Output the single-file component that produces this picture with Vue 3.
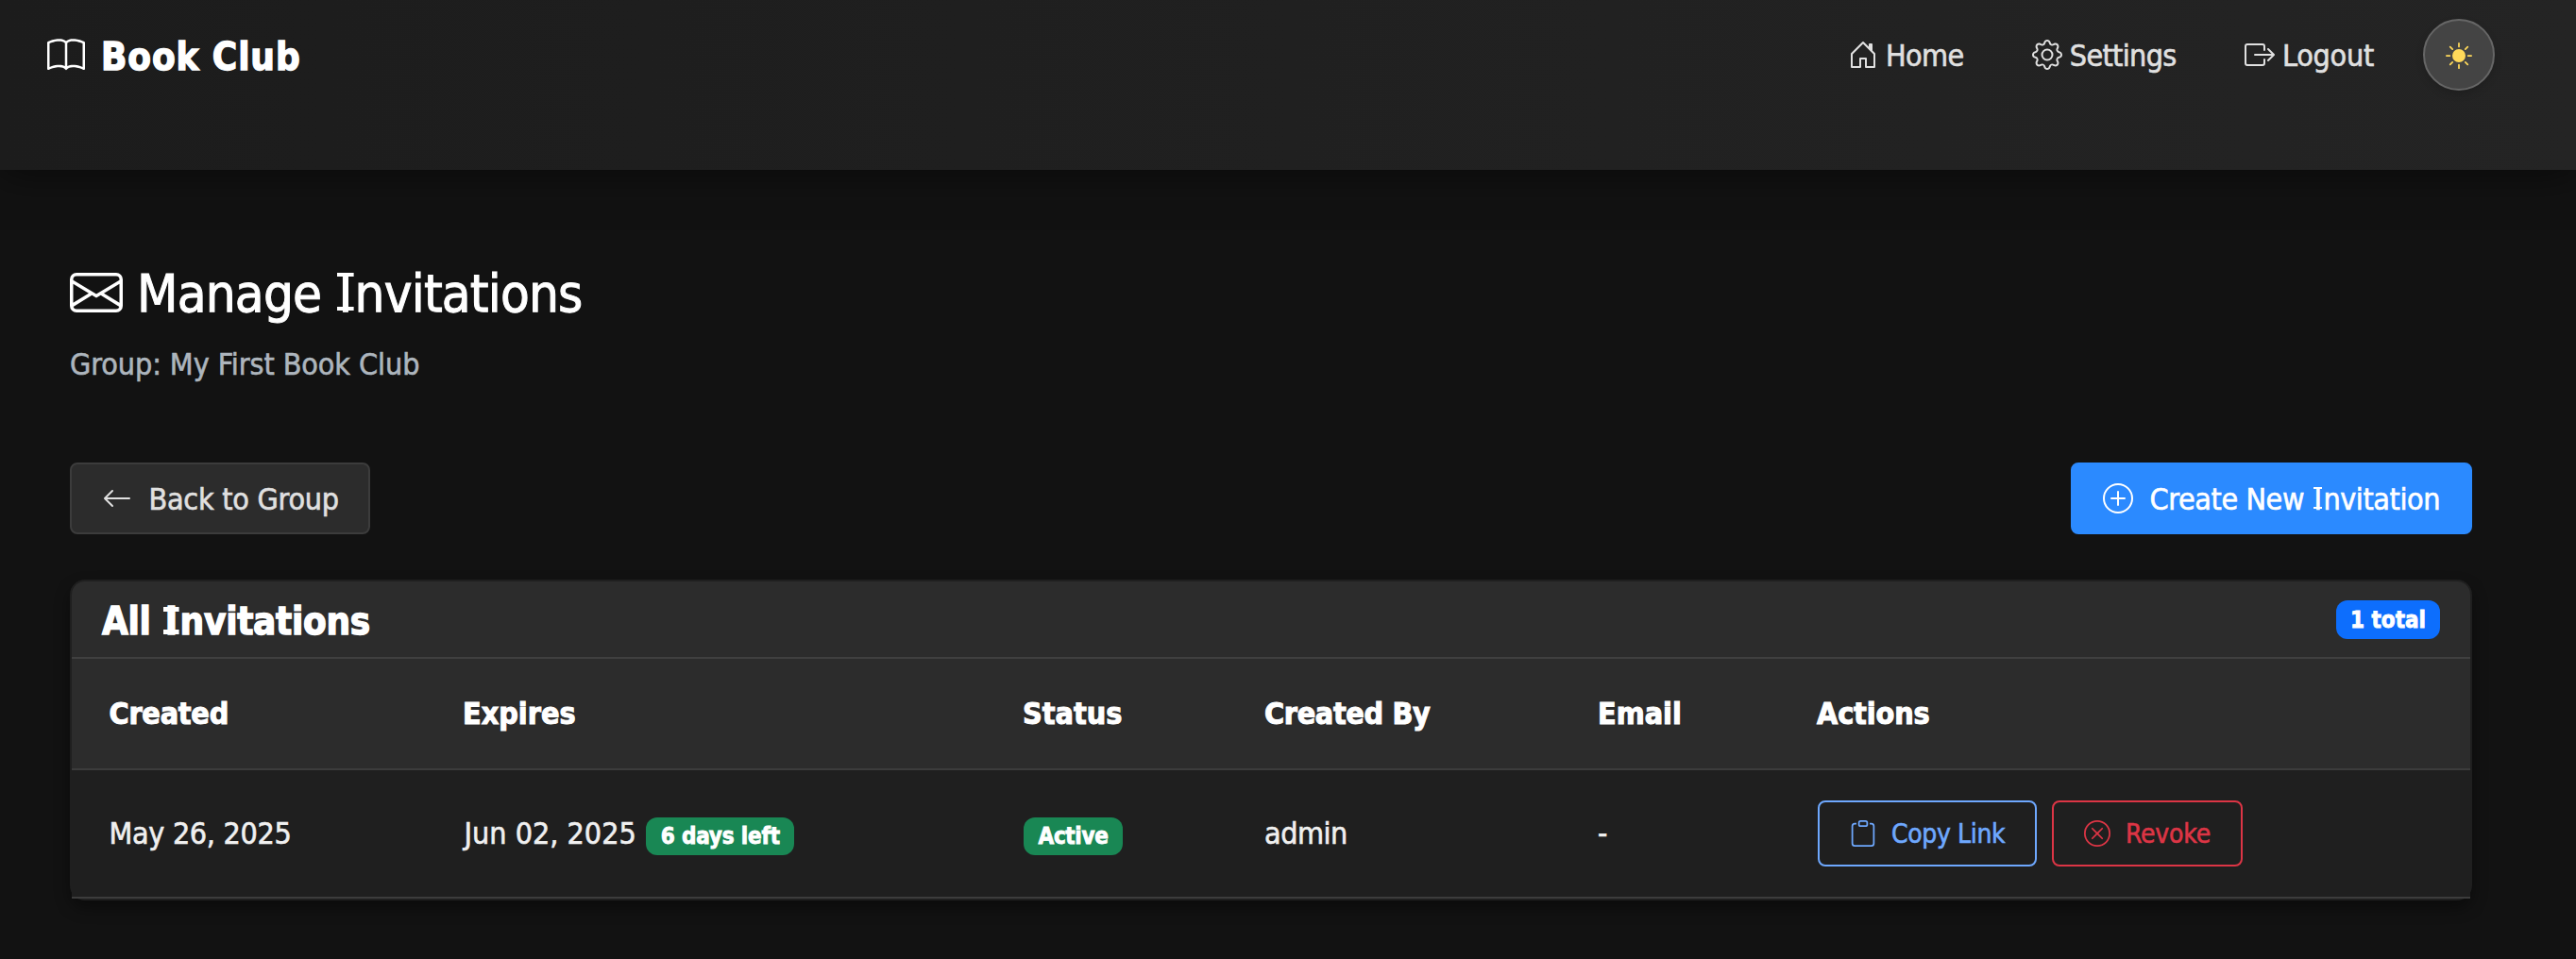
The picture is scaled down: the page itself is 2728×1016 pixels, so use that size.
<script setup>
const columns = [
  { key: 'created', label: 'Created', width: 374 },
  { key: 'expires', label: 'Expires', width: 593 },
  { key: 'status', label: 'Status', width: 256 },
  { key: 'by', label: 'Created By', width: 353 },
  { key: 'email', label: 'Email', width: 232 },
  { key: 'actions', label: 'Actions', width: 732 },
]
</script>

<template>
  <div class="page">
    <header class="navbar">
      <a class="brand">
        <svg class="icon i40" viewBox="0 0 16 16"><path d="M1 2.828c.885-.37 2.154-.769 3.388-.893 1.33-.134 2.458.063 3.112.752v9.746c-.935-.53-2.12-.603-3.213-.493-1.18.12-2.37.461-3.287.811zm7.5-.141c.654-.689 1.782-.886 3.112-.752 1.234.124 2.503.523 3.388.893v9.923c-.918-.35-2.107-.692-3.287-.81-1.094-.111-2.278-.039-3.213.492zM8 1.783C7.015.936 5.587.81 4.287.94c-1.514.153-3.042.672-3.994 1.105A.5.5 0 0 0 0 2.5v11a.5.5 0 0 0 .707.455c.882-.4 2.303-.881 3.68-1.02 1.409-.142 2.59.087 3.223.877a.5.5 0 0 0 .78 0c.633-.79 1.814-1.019 3.222-.877 1.378.139 2.8.62 3.681 1.02A.5.5 0 0 0 16 13.5v-11a.5.5 0 0 0-.293-.455c-.952-.433-2.48-.952-3.994-1.105C10.413.809 8.985.936 8 1.783" /></svg>
        <span class="brand-name">Book Club</span>
      </a>
      <nav class="links">
        <a class="link home">
          <svg class="icon i32" viewBox="0 0 16 16"><path d="M8.354 1.146a.5.5 0 0 0-.708 0l-6 6A.5.5 0 0 0 1.5 7.5v7a.5.5 0 0 0 .5.5h4.5a.5.5 0 0 0 .5-.5v-4h2v4a.5.5 0 0 0 .5.5H14a.5.5 0 0 0 .5-.5v-7a.5.5 0 0 0-.146-.354L13 5.793V2.5a.5.5 0 0 0-.5-.5h-1a.5.5 0 0 0-.5.5v1.293zM2.5 14V7.707l5.5-5.5 5.5 5.5V14H10v-4a.5.5 0 0 0-.5-.5h-3a.5.5 0 0 0-.5.5v4z" /></svg>
          <span>Home</span>
        </a>
        <a class="link settings">
          <svg class="icon i32" viewBox="0 0 16 16"><path d="M8 4.754a3.246 3.246 0 1 0 0 6.492 3.246 3.246 0 0 0 0-6.492M5.754 8a2.246 2.246 0 1 1 4.492 0 2.246 2.246 0 0 1-4.492 0" /><path d="M9.796 1.343c-.527-1.79-3.065-1.79-3.592 0l-.094.319a.873.873 0 0 1-1.255.52l-.292-.16c-1.64-.892-3.433.902-2.54 2.541l.159.292a.873.873 0 0 1-.52 1.255l-.319.094c-1.79.527-1.79 3.065 0 3.592l.319.094a.873.873 0 0 1 .52 1.255l-.16.292c-.892 1.64.901 3.434 2.541 2.54l.292-.159a.873.873 0 0 1 1.255.52l.094.319c.527 1.79 3.065 1.79 3.592 0l.094-.319a.873.873 0 0 1 1.255-.52l.292.16c1.64.893 3.434-.902 2.54-2.541l-.159-.292a.873.873 0 0 1 .52-1.255l.319-.094c1.79-.527 1.79-3.065 0-3.592l-.319-.094a.873.873 0 0 1-.52-1.255l.16-.292c.893-1.64-.902-3.433-2.541-2.54l-.292.159a.873.873 0 0 1-1.255-.52zm-2.633.283c.246-.835 1.428-.835 1.674 0l.094.319a1.873 1.873 0 0 0 2.693 1.115l.291-.16c.764-.415 1.6.42 1.184 1.185l-.159.292a1.873 1.873 0 0 0 1.116 2.692l.318.094c.835.246.835 1.428 0 1.674l-.319.094a1.873 1.873 0 0 0-1.115 2.693l.16.291c.415.764-.42 1.6-1.185 1.184l-.291-.159a1.873 1.873 0 0 0-2.693 1.116l-.094.318c-.246.835-1.428.835-1.674 0l-.094-.319a1.873 1.873 0 0 0-2.692-1.115l-.292.16c-.764.415-1.6-.42-1.184-1.185l.159-.291A1.873 1.873 0 0 0 1.945 8.93l-.319-.094c-.835-.246-.835-1.428 0-1.674l.319-.094A1.873 1.873 0 0 0 3.06 4.377l-.16-.292c-.415-.764.42-1.6 1.185-1.184l.292.159a1.873 1.873 0 0 0 2.692-1.115z" /></svg>
          <span>Settings</span>
        </a>
        <a class="link logout">
          <svg class="icon i32" viewBox="0 0 16 16"><path fill-rule="evenodd" d="M10 12.5a.5.5 0 0 1-.5.5h-8a.5.5 0 0 1-.5-.5v-9a.5.5 0 0 1 .5-.5h8a.5.5 0 0 1 .5.5v2a.5.5 0 0 0 1 0v-2A1.5 1.5 0 0 0 9.5 2h-8A1.5 1.5 0 0 0 0 3.5v9A1.5 1.5 0 0 0 1.5 14h8a1.5 1.5 0 0 0 1.5-1.5v-2a.5.5 0 0 0-1 0z" /><path fill-rule="evenodd" d="M15.854 8.354a.5.5 0 0 0 0-.708l-3-3a.5.5 0 0 0-.708.708L14.293 7.5H5.5a.5.5 0 0 0 0 1h8.793l-2.147 2.146a.5.5 0 0 0 .708.708z" /></svg>
          <span>Logout</span>
        </a>
      </nav>
      <button class="theme" aria-label="Toggle theme">
        <svg class="icon sun" viewBox="0 0 16 16"><path d="M8 12a4 4 0 1 0 0-8 4 4 0 0 0 0 8M8 0a.5.5 0 0 1 .5.5v2a.5.5 0 0 1-1 0v-2A.5.5 0 0 1 8 0m0 13a.5.5 0 0 1 .5.5v2a.5.5 0 0 1-1 0v-2A.5.5 0 0 1 8 13m8-5a.5.5 0 0 1-.5.5h-2a.5.5 0 0 1 0-1h2a.5.5 0 0 1 .5.5M3 8a.5.5 0 0 1-.5.5h-2a.5.5 0 0 1 0-1h2A.5.5 0 0 1 3 8m10.657-5.657a.5.5 0 0 1 0 .707l-1.414 1.415a.5.5 0 1 1-.707-.708l1.414-1.414a.5.5 0 0 1 .707 0m-9.193 9.193a.5.5 0 0 1 0 .707L3.05 13.657a.5.5 0 0 1-.707-.707l1.414-1.414a.5.5 0 0 1 .707 0m9.193 2.121a.5.5 0 0 1-.707 0l-1.414-1.414a.5.5 0 0 1 .707-.707l1.414 1.414a.5.5 0 0 1 0 .707M4.464 4.465a.5.5 0 0 1-.707 0L2.343 3.05a.5.5 0 1 1 .707-.707l1.414 1.414a.5.5 0 0 1 0 .708" /></svg>
      </button>
    </header>

    <main class="content">
      <h1 class="title">
        <svg class="icon i56" viewBox="0 0 16 16"><path d="M0 4a2 2 0 0 1 2-2h12a2 2 0 0 1 2 2v8a2 2 0 0 1-2 2H2a2 2 0 0 1-2-2zm2-1a1 1 0 0 0-1 1v.217l7 4.2 7-4.2V4a1 1 0 0 0-1-1zm13 2.383-4.708 2.825L15 11.105zm-.034 6.876-5.64-3.471L8 9.583l-1.326-.795-5.64 3.47A1 1 0 0 0 2 13h12a1 1 0 0 0 .966-.741M1 11.105l4.708-2.897L1 5.383z" /></svg>
        <span class="title-text">Manage <span class="cap-i">I</span>nvitations</span>
      </h1>
      <p class="subtitle">Group: My First Book Club</p>

      <div class="toolbar">
        <button class="btn back">
          <svg class="icon i32" viewBox="0 0 16 16"><path fill-rule="evenodd" d="M15 8a.5.5 0 0 0-.5-.5H2.707l3.147-3.146a.5.5 0 1 0-.708-.708l-4 4a.5.5 0 0 0 0 .708l4 4a.5.5 0 0 0 .708-.708L2.707 8.5H14.5A.5.5 0 0 0 15 8" /></svg>
          <span>Back to Group</span>
        </button>
        <button class="btn create">
          <svg class="icon i32" viewBox="0 0 16 16"><path d="M8 15A7 7 0 1 1 8 1a7 7 0 0 1 0 14m0 1A8 8 0 1 0 8 0a8 8 0 0 0 0 16" /><path d="M8 4a.5.5 0 0 1 .5.5v3h3a.5.5 0 0 1 0 1h-3v3a.5.5 0 0 1-1 0v-3h-3a.5.5 0 0 1 0-1h3v-3A.5.5 0 0 1 8 4" /></svg>
          <span>Create New <span class="cap-i">I</span>nvitation</span>
        </button>
      </div>

      <section class="card">
        <div class="card-header">
          <h2 class="card-title">All <span class="cap-i bold">I</span>nvitations</h2>
          <span class="badge total">1 total</span>
        </div>
        <table class="table">
          <colgroup>
            <col v-for="c in columns" :key="c.key" :style="{ width: c.width + 'px' }" />
          </colgroup>
          <thead>
            <tr>
              <th v-for="c in columns" :key="c.key" :class="'th-' + c.key">{{ c.label }}</th>
            </tr>
          </thead>
          <tbody>
            <tr>
              <td class="date">May 26, 2025</td>
              <td>
                <div class="expires">
                  <span>Jun 02, 2025</span>
                  <span class="badge days">6 days left</span>
                </div>
              </td>
              <td><div class="state"><span class="badge active">Active</span></div></td>
              <td class="user">admin</td>
              <td>-</td>
              <td>
                <div class="actions">
                  <button class="btn-sm copy">
                    <svg class="icon i28" viewBox="0 0 16 16"><path d="M4 1.5H3a2 2 0 0 0-2 2V14a2 2 0 0 0 2 2h10a2 2 0 0 0 2-2V3.5a2 2 0 0 0-2-2h-1v1h1a1 1 0 0 1 1 1V14a1 1 0 0 1-1 1H3a1 1 0 0 1-1-1V3.5a1 1 0 0 1 1-1h1z" /><path d="M9.5 1a.5.5 0 0 1 .5.5v1a.5.5 0 0 1-.5.5h-3a.5.5 0 0 1-.5-.5v-1a.5.5 0 0 1 .5-.5zm-3-1A1.5 1.5 0 0 0 5 1.5v1A1.5 1.5 0 0 0 6.5 4h3A1.5 1.5 0 0 0 11 2.5v-1A1.5 1.5 0 0 0 9.5 0z" /></svg>
                    <span>Copy Link</span>
                  </button>
                  <button class="btn-sm revoke">
                    <svg class="icon i28" viewBox="0 0 16 16"><path d="M8 15A7 7 0 1 1 8 1a7 7 0 0 1 0 14m0 1A8 8 0 1 0 8 0a8 8 0 0 0 0 16" /><path d="M4.646 4.646a.5.5 0 0 1 .708 0L8 7.293l2.646-2.647a.5.5 0 0 1 .708.708L8.707 8l2.647 2.646a.5.5 0 0 1-.708.708L8 8.707l-2.646 2.647a.5.5 0 0 1-.708-.708L7.293 8 4.646 5.354a.5.5 0 0 1 0-.708" /></svg>
                    <span>Revoke</span>
                  </button>
                </div>
              </td>
            </tr>
          </tbody>
        </table>
      </section>
    </main>
  </div>
</template>

<style>
body {
  margin: 0;
  background: #121212;
}
</style>

<style scoped>
.page,
.page button {
  font-family: Tahoma, "DejaVu Sans Condensed", "DejaVu Sans", sans-serif;
  font-stretch: condensed;
  -webkit-text-stroke: 0.6px currentColor;
}
.page {
  box-sizing: border-box;
  height: 1016px;
  overflow: hidden;
  background: #121212;
  color: #f0f0f0;
  font-size: 32px;
  line-height: 48px;
  white-space: nowrap;
}
.page * {
  box-sizing: border-box;
}
.icon {
  display: block;
  flex: none;
  fill: currentColor;
}
.i28 { width: 28px; height: 28px; }
.i32 { width: 32px; height: 32px; }
.i40 { width: 40px; height: 40px; }
.i56 { width: 56px; height: 56px; }

/* slab serifs for the capital I */
.cap-i {
  --bar: 0.078em;
  padding: 0 0.055em;
  background:
    linear-gradient(currentColor, currentColor) 50% 0.199em / calc(100% - 0.06em) var(--bar) no-repeat,
    linear-gradient(currentColor, currentColor) 50% calc(0.93em - var(--bar)) / calc(100% - 0.06em) var(--bar) no-repeat;
}
.cap-i.bold {
  --bar: 0.125em;
  padding: 0 0.07em;
}

.navbar {
  display: flex;
  align-items: flex-start;
  height: 180px;
  padding: 20px 86px 0 50px;
  background: linear-gradient(90deg, #1c1c1c, #242424);
  box-shadow: 0 4px 40px rgba(0, 0, 0, 0.5);
}
.brand {
  display: flex;
  align-items: center;
  gap: 17px;
  height: 78px;
  color: #fff;
}
.brand-name {
  margin-top: 2px;
  font-size: 40px;
  font-weight: 700;
  letter-spacing: 0.9px;
  -webkit-text-stroke-width: 1.3px;
}
.links {
  display: flex;
  gap: 72.3px;
  height: 76px;
  margin-left: auto;
  margin-right: 52px;
  color: #e0e0e0;
}
.link {
  display: flex;
  align-items: center;
  gap: 8px;
}
.link span {
  margin-top: 1px;
}
.home span { letter-spacing: -0.6px; }
.settings span { letter-spacing: -0.66px; }
.logout span { letter-spacing: -0.24px; }
.theme {
  display: flex;
  align-items: center;
  justify-content: center;
  width: 76px;
  height: 76px;
  padding: 2px 0 0;
  border: 2px solid #666;
  border-radius: 50%;
  background: #444;
  box-shadow: 0 4px 8px rgba(0, 0, 0, 0.15);
}
.sun {
  width: 28px;
  height: 28px;
  color: #ffd95a;
}

.content {
  padding: 102px 110px 0 74px;
}
.title {
  display: flex;
  align-items: center;
  gap: 15px;
  height: 56px;
  margin: 0;
  color: #fff;
  font-size: 56px;
  font-weight: 400;
  line-height: 66px;
}
.title-text {
  margin-top: 1px;
  letter-spacing: -0.82px;
  -webkit-text-stroke-width: 1px;
}
.subtitle {
  margin: 24px 0 80px;
  color: #adb5bd;
  letter-spacing: -0.08px;
}
.toolbar {
  display: flex;
  justify-content: space-between;
}
.btn {
  display: flex;
  align-items: center;
  height: 76px;
  margin: 0;
  padding: 0;
  border: 2px solid;
  border-radius: 8px;
  font-size: 32px;
  line-height: 48px;
}
.btn > span {
  margin-top: 2px;
}
.back {
  width: 318px;
  padding-left: 32px;
  gap: 17.5px;
  border-color: #3c3c3c;
  background: #2c2c2c;
  color: #e0e0e0;
  letter-spacing: -0.26px;
}
.create {
  width: 425px;
  padding-left: 32px;
  gap: 17.5px;
  border-color: #2b8aff;
  background: #2b8aff;
  color: #fff;
  letter-spacing: -0.4px;
}

.card {
  height: 340px;
  margin-top: 48px;
  border: 2px solid #1f1f1f;
  border-radius: 16px;
  background: #1f1f1f;
  box-shadow: 0 8px 16px rgba(0, 0, 0, 0.4);
}
.card-header {
  display: flex;
  align-items: center;
  justify-content: space-between;
  height: 82px;
  padding: 0 32px;
  border-bottom: 2px solid #404040;
  border-radius: 14px 14px 0 0;
  background: #2c2c2c;
}
.card-title {
  margin: 4px 0 0;
  color: #fff;
  font-size: 40px;
  font-weight: 700;
  letter-spacing: -0.28px;
  -webkit-text-stroke-width: 1.3px;
}
.badge {
  display: flex;
  align-items: center;
  justify-content: center;
  height: 40px;
  border-radius: 12px;
  color: #fff;
  font-size: 24px;
  font-weight: 700;
  line-height: 28px;
  -webkit-text-stroke-width: 0.8px;
}
.total {
  width: 110px;
  height: 41px;
  padding-top: 1px;
  background: #0d6efd;
}
.table {
  width: 2540px;
  table-layout: fixed;
  border-collapse: separate;
  border-spacing: 0;
}
th,
td {
  padding: 0 0 0 40px;
  border-bottom: 2px solid #3c3c3c;
  text-align: left;
  vertical-align: middle;
}
th {
  height: 118px;
  background: #2c2c2c;
  color: #fff;
  font-weight: 700;
  -webkit-text-stroke-width: 1px;
}
td {
  height: 136px;
  background: #1f1f1f;
}
.th-created { padding-left: 39.5px; letter-spacing: -0.24px; }
.th-by { letter-spacing: -0.35px; }
.th-actions { letter-spacing: -0.11px; }
.date { padding-left: 39.5px; letter-spacing: -0.32px; }
.user { letter-spacing: -0.49px; }
.expires {
  display: flex;
  align-items: center;
  gap: 10.5px;
  padding-left: 1.5px;
}
.days {
  width: 157px;
  margin-top: 6px;
  background: #198754;
  letter-spacing: -0.17px;
}
.state {
  display: flex;
}
.active {
  width: 105px;
  margin: 6px 0 0 1px;
  background: #198754;
  letter-spacing: -0.32px;
}
.actions {
  display: flex;
  gap: 16px;
  padding-left: 1px;
}
.btn-sm {
  display: flex;
  align-items: center;
  height: 70px;
  margin: 0;
  padding: 0 0 0 32px;
  gap: 16px;
  border: 2px solid currentColor;
  border-radius: 8px;
  background: transparent;
  font-size: 28px;
  line-height: 42px;
}
.btn-sm span {
  margin-top: 2px;
}
.copy {
  width: 232px;
  color: #6ea8fe;
  letter-spacing: -0.36px;
}
.revoke {
  width: 202px;
  color: #dc3545;
  letter-spacing: -0.19px;
}
</style>
